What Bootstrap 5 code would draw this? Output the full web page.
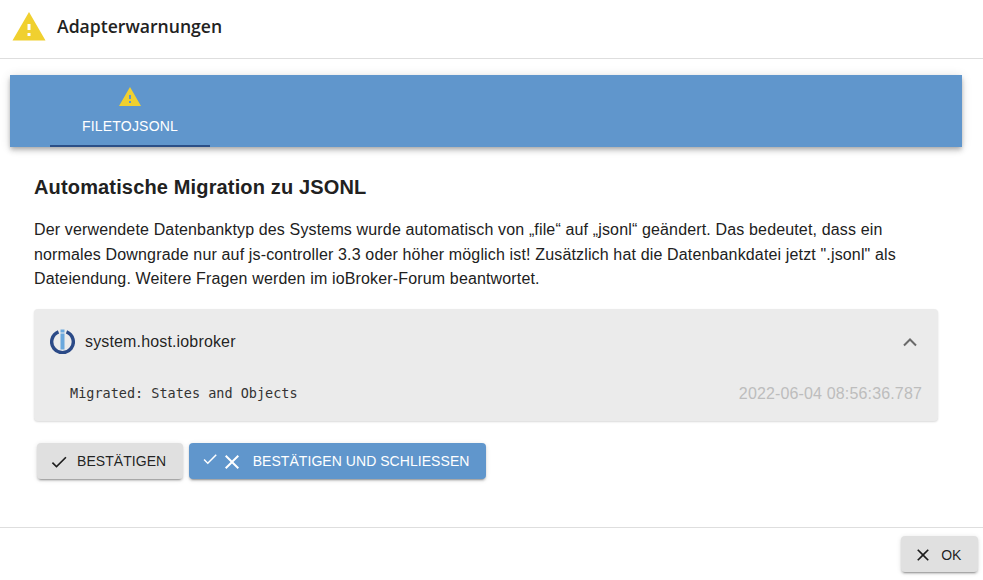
<!DOCTYPE html>
<html lang="de"><head><meta charset="utf-8">
<link href="https://cdn.jsdelivr.net/npm/bootstrap@5.3.0/dist/css/bootstrap.min.css" rel="stylesheet">
<style>
html,body{height:580px;overflow:hidden;background:#fff}
body{font-family:"Liberation Sans",Arial,sans-serif;color:rgba(0,0,0,.87);letter-spacing:.15px}
.dlg-head{height:59px;border-bottom:1px solid #dedede;padding:0 0 5px 11px;gap:10px}
.dlg-title{font-family:"Open Sans",sans-serif;font-weight:600;font-size:17.6px;margin:0;letter-spacing:0;color:#222}
.dlg-body{height:468px;padding:16px 21px 0 10px}
.tabbar{height:72px;background:#6096cc;box-shadow:0 2px 4px -1px rgba(0,0,0,.2),0 4px 5px rgba(0,0,0,.14),0 1px 10px rgba(0,0,0,.12);padding-left:40px}
.tabitem{width:160px;height:72px;border-bottom:2px solid #2b4f87;color:#fff;font-size:14px;letter-spacing:.2px;padding-top:10px;gap:7px;line-height:20px}
.pane{padding:0 24px 0 24px}
.mig-title{font-size:20px;font-weight:700;margin:28px 0 0;line-height:24px;color:#212121}
.mig-text{font-size:16px;line-height:24.5px;margin:19px 0 0;color:#212121;width:880px}
.acc{height:112px;margin-top:17px;background:#ebebeb;border-radius:4px;box-shadow:0 1px 2px rgba(0,0,0,.15);padding:0 16px}
.acc-head{height:66px;gap:10px;font-size:16px}
.acc-row{padding:0 0 0 20px;height:38px}
.mono{font-family:"DejaVu Sans Mono","Liberation Mono",monospace;font-size:13.5px;letter-spacing:0;color:#333}
.stamp{font-size:16px;color:#bdbdbd}
.btn-row{gap:6px;margin:22px 0 0 3px}
.mbtn{height:36px;border:0;border-radius:4px;font-size:14px;letter-spacing:.05px;text-transform:uppercase;box-shadow:0 3px 1px -2px rgba(0,0,0,.2),0 2px 2px rgba(0,0,0,.14),0 1px 5px rgba(0,0,0,.12);padding:2px 16.500px 0 12px}
.mbtn-grey{background:#e0e0e0;color:rgba(0,0,0,.87)}
.mbtn-blue{background:#6096cc;color:#fff}
.ico{width:20px;height:20px;margin-right:8px;flex:none}
.ico-small{width:18px;height:18px;margin-right:3px;margin-top:-6px;flex:none}
.ico-wide{margin-right:11px}
.dlg-foot{height:53px;border-top:1px solid #dedede;padding:8px 5px 0 0}
</style></head><body>
<header class="dlg-head d-flex align-items-center">
<svg width="36" height="36" viewBox="0 0 24 24"><path fill="#f0d02f" d="M1 21h22L12 2 1 21zm12-3h-2v-2h2v2zm0-4h-2v-4h2v4z"/></svg>
<h1 class="dlg-title">Adapterwarnungen</h1>
</header>
<main class="dlg-body">
<div class="tabbar d-flex"><div class="tabitem d-flex flex-column align-items-center">
<svg width="24" height="24" viewBox="0 0 24 24"><path fill="#f0d02f" d="M1 21h22L12 2 1 21zm12-3h-2v-2h2v2zm0-4h-2v-4h2v4z"/></svg>
<span>FILETOJSONL</span></div></div>
<section class="pane">
<h2 class="mig-title">Automatische Migration zu JSONL</h2>
<p class="mig-text">Der verwendete Datenbanktyp des Systems wurde automatisch von „file“ auf „jsonl“ geändert. Das bedeutet, dass ein normales Downgrade nur auf js-controller 3.3 oder höher möglich ist! Zusätzlich hat die Datenbankdatei jetzt ".jsonl" als Dateiendung. Weitere Fragen werden im ioBroker-Forum beantwortet.</p>
<div class="acc">
<div class="acc-head d-flex align-items-center">
<svg width="25" height="25" viewBox="0 0 25 25"><path d="M8.500 2.800A10.800 10.800 0 1 0 16.500 2.800" fill="none" stroke="#2b4a87" stroke-width="3.400"/><rect x="10.500" y="0.500" width="4" height="3" fill="#6aa8dd"/><rect x="10.500" y="4.500" width="4" height="16" fill="#6aa8dd"/></svg>
<span class="flex-grow-1">system.host.iobroker</span>
<svg class="me-1" width="16" height="16" viewBox="0 0 16 16"><path d="M2 11.500 8 5.500 14 11.500" fill="none" stroke="#6a6a6a" stroke-width="2"/></svg>
</div>
<div class="acc-row d-flex justify-content-between align-items-center"><span class="mono">Migrated: States and Objects</span><span class="stamp">2022-06-04 08:56:36.787</span></div>
</div>
<div class="btn-row d-flex">
<button class="mbtn mbtn-grey d-flex align-items-center"><svg class="ico" viewBox="0 0 24 24"><path d="M9 16.200 4.800 12l-1.400 1.400L9 19 21 7l-1.400-1.400z" fill="currentColor"/></svg>Bestätigen</button>
<button class="mbtn mbtn-blue d-flex align-items-center"><svg class="ico-small" viewBox="0 0 24 24"><path d="M9 16.200 4.800 12l-1.400 1.400L9 19 21 7l-1.400-1.400z" fill="currentColor"/></svg><svg class="ico ico-wide" viewBox="0 0 24 24"><path d="M19 6.400 17.600 5 12 10.600 6.400 5 5 6.400 10.600 12 5 17.600 6.400 19 12 13.400 17.600 19 19 17.600 13.400 12z" transform="translate(-2.400 -2.400) scale(1.200)" fill="currentColor"/></svg>Bestätigen und schliessen</button>
</div>
</section>
</main>
<footer class="dlg-foot d-flex justify-content-end">
<button class="mbtn mbtn-grey d-flex align-items-center"><svg class="ico" viewBox="0 0 24 24"><path d="M19 6.400 17.600 5 12 10.600 6.400 5 5 6.400 10.600 12 5 17.600 6.400 19 12 13.400 17.600 19 19 17.600 13.400 12z" fill="currentColor"/></svg>OK</button>
</footer>
<script src="https://cdn.jsdelivr.net/npm/bootstrap@5.3.0/dist/js/bootstrap.bundle.min.js"></script>
</body></html>
